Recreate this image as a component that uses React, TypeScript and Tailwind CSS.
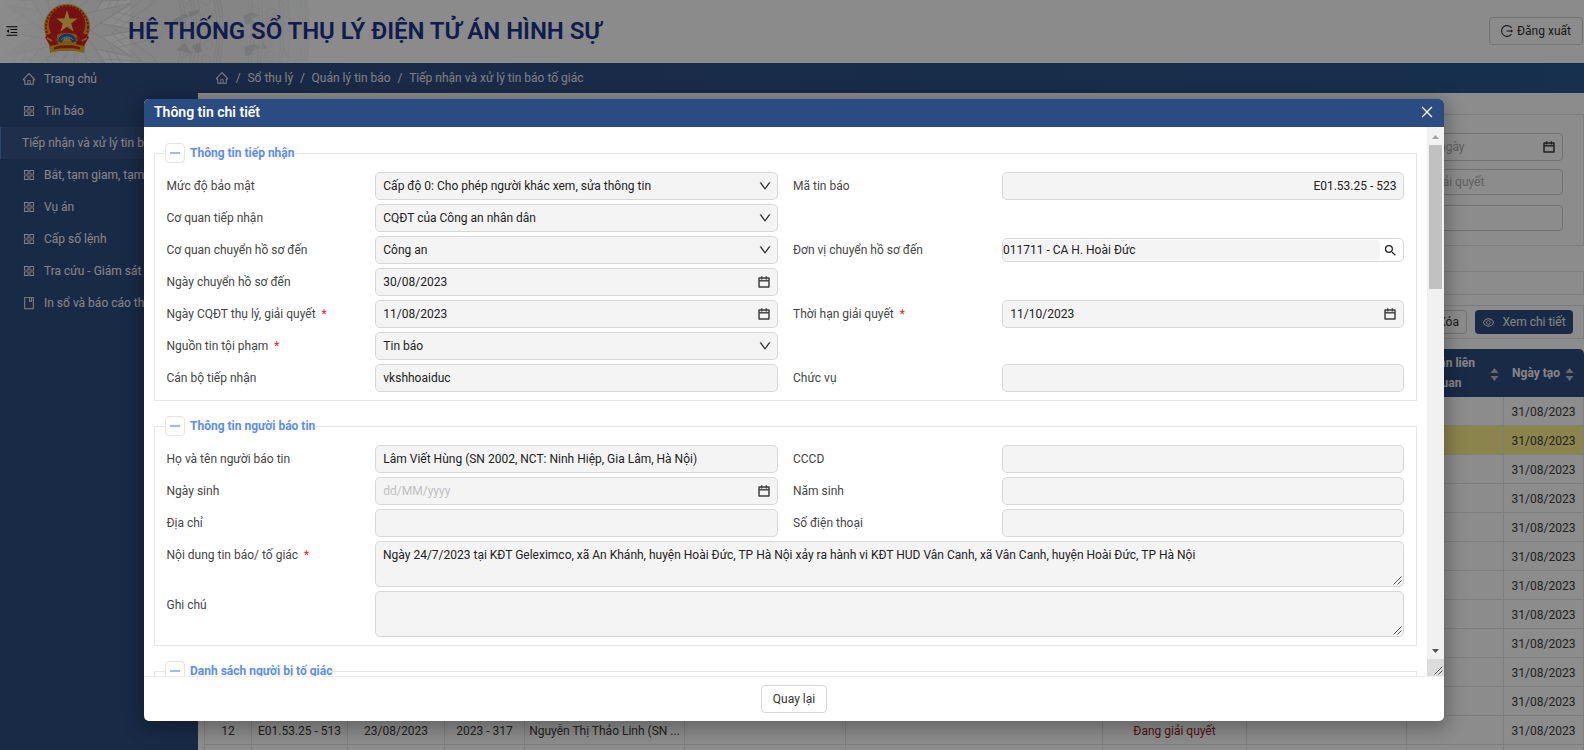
import React from "react";
import {
  AiOutlineHome,
  AiOutlineAppstore,
  AiOutlineBook,
  AiOutlineMenuFold,
  AiOutlineLogout,
  AiOutlineEye,
  AiOutlineCalendar,
  AiOutlineDown,
  AiOutlineClose,
} from "react-icons/ai";
import { MdSearch } from "react-icons/md";

function Watermark() {
  const rays = Array.from({ length: 16 }, (_, i) => i * 22.5);
  const marks = Array.from({ length: 60 }, (_, i) => i * 6);
  return (
    <svg width="330" height="63" viewBox="0 0 330 63" className="absolute left-0 top-0" aria-hidden="true">
      <defs>
        <linearGradient id="fade" x1="0" x2="1">
          <stop offset="0" stopColor="#fff" stopOpacity="0" />
          <stop offset="0.2" stopColor="#fff" stopOpacity="0.9" />
          <stop offset="0.7" stopColor="#fff" stopOpacity="0.9" />
          <stop offset="1" stopColor="#fff" stopOpacity="0.15" />
        </linearGradient>
        <mask id="fadeMask">
          <rect width="330" height="63" fill="url(#fade)" />
        </mask>
      </defs>
      <g mask="url(#fadeMask)" fill="none" stroke="#dddddf" strokeWidth="1">
        <path d="M130 0H308V63H130Z" fill="#f0f0f1" stroke="none" />
        {rays.map((a) => (
          <g key={a} transform={`translate(67 30) rotate(${a})`}>
            <path d="M20 -9L70 0L20 9" fill="#f1f2f1" />
            <path d="M42 -14L58 -8L82 0L58 8L42 14M40 -20L90 -8L100 0L90 8L40 20" strokeWidth="0.8" />
          </g>
        ))}
        {[116, 119, 127, 130, 134, 150, 153, 156, 184, 187, 193, 196, 214, 217, 223, 236, 239, 242].map((r) => (
          <circle key={r} cx="67" cy="30" r={r} strokeWidth="0.9" />
        ))}
        {marks.map((a) => (
          <g key={a} transform={`translate(67 30) rotate(${a})`}>
            <path d="M119 -4L127 3M119 3L127 -4M187 -6L193 0L187 6M217 -6L223 5M228 -8L236 0L228 8" strokeWidth="0.8" />
            <circle cx="142" cy="0" r="4.5" strokeWidth="0.8" />
            <circle cx="205" cy="5" r="5" strokeWidth="0.8" />
          </g>
        ))}
        <path
          d="M172 20l12-6 6 2-9 4 6 3-10 3zM176 50l9-7 3 5 4 6-6-2zM188 12l12-3-2 5-8 3zM192 46l8-4 2 10-6 1zM243 16l9-4 8 4-9 2 3 5-8 1zM244 47l10-3 8 3-8 3-3 5-6 1zM262 40l5 8-4 1z"
          fill="#d2d3d5"
          stroke="none"
        />
      </g>
    </svg>
  );
}

function Emblem() {
  return (
    <svg width="48" height="50" viewBox="0 0 48 50" className="relative" aria-hidden="true">
      <circle cx="24" cy="23" r="22.9" fill="#e3a51c" />
      <circle cx="24" cy="23" r="21" fill="none" stroke="#d2261f" strokeWidth="2" strokeDasharray="2.2 1.300" />
      <circle cx="24" cy="20.5" r="18.3" fill="#d6221f" />
      <path d="M2 33L8 29L14 37L34 37L40 29L46 33L41.500 41L41 48L31 46.500L17 46.500L7 48L6.500 41Z" fill="#d6221f" />
      <path d="M4 34L9 37M44 34L39 37" stroke="#e2b21c" strokeWidth="1.500" fill="none" />
      <path d="M7 42L17 40H31L41 42V49L31 46.500H17L7 49Z" fill="#e2b21c" />
      <path d="M11 43L18 41.300H30L37 43V45.500L30 44.300H18L11 45.500Z" fill="#cf2a1e" />
      <path
        d="M24 6L26.600 14.600H34.500L28.200 19.600L30.500 27.500L24 22.700L17.500 27.500L19.800 19.600L13.500 14.600H21.400Z"
        fill="#f7cf5c"
      />
      <path d="M14 32C14 28 34 28 34 32L33 40H15Z" fill="#dda51d" />
      <path d="M15 37a9 7.500 0 0 1 18 0l-4 2a5 5 0 0 0-10 0Z" fill="#2a63ad" />
      <path d="M18 36a6.500 5 0 0 1 12 0M21 34l1 3M24 33v4M27 34l-1 3" fill="none" stroke="#b9cfe8" strokeWidth="0.9" />
    </svg>
  );
}

const menu = [
  { icon: AiOutlineHome, label: "Trang chủ" },
  { icon: AiOutlineAppstore, label: "Tin báo" },
  { label: "Tiếp nhận và xử lý tin báo tố giác", active: true },
  { icon: AiOutlineAppstore, label: "Bắt, tạm giam, tạm giữ" },
  { icon: AiOutlineAppstore, label: "Vụ án" },
  { icon: AiOutlineAppstore, label: "Cấp số lệnh" },
  { icon: AiOutlineAppstore, label: "Tra cứu - Giám sát" },
  { icon: AiOutlineBook, label: "In sổ và báo cáo thống kê" },
];

function Sidebar() {
  return (
    <nav className="w-[198px] shrink-0 bg-[#2f4e82] text-[12px] text-[#f2f2f2]">
      {menu.map(({ icon: Icon, label, active }) => (
        <div
          key={label}
          className={
            active
              ? "flex h-8 items-center whitespace-nowrap border-l border-[#4a7fd8] bg-[#375489] pl-[21px]"
              : "flex h-8 items-center whitespace-nowrap pl-[22px]"
          }
        >
          {Icon && <Icon className="mb-px mr-2 size-3.5 shrink-0" />}
          <span>{label}</span>
        </div>
      ))}
    </nav>
  );
}

function Sorter() {
  return (
    <svg width="9" height="13" viewBox="0 0 9 13" fill="#bfbfbf" className="mt-0.5" aria-hidden="true">
      <path d="M4.500 0L8.500 5H0.500ZM4.500 13L0.500 8H8.500Z" />
    </svg>
  );
}

const columns =
  "grid grid-cols-[47px_96px_97px_80px_160px_161px_257px_144px_160px_97px_80px] border-l border-[#e6e6e6]";

function Cell({ children, className = "" }: { children?: React.ReactNode; className?: string }) {
  return (
    <div className={`flex items-center justify-center border-b border-r border-[#e6e6e6] pt-px ${className}`}>{children}</div>
  );
}

function Table() {
  return (
    <div className="ml-1.5 mt-[10px] text-[12px] text-[#3c3c3c]">
      <div className="flex h-12 justify-end rounded-t-[5px] bg-[#2f4e82] text-[12px] font-bold leading-5 text-[#f2f2f2]">
        <div className="flex w-[97px] items-center justify-end pr-[5px]">
          <span className="mr-[15px] whitespace-nowrap text-center">
            Dự án liên
            <br />
            quan
          </span>
          <Sorter />
        </div>
        <div className="flex w-[80px] items-center justify-end gap-[5px] pr-[10px]">
          <span className="whitespace-nowrap">Ngày tạo</span>
          <Sorter />
        </div>
      </div>
      {Array.from({ length: 13 }, (_, i) => {
        const last = i === 11;
        return (
          <div key={i} className={`${columns} h-[29px] ${i === 1 ? "bg-[#fff08c]" : ""}`}>
            <Cell>{last && "12"}</Cell>
            <Cell>{last && "E01.53.25 - 513"}</Cell>
            <Cell>{last && "23/08/2023"}</Cell>
            <Cell>{last && "2023 - 317"}</Cell>
            <Cell className="whitespace-nowrap">{last && "Nguyễn Thị Thảo Linh (SN ..."}</Cell>
            <Cell />
            <Cell />
            <Cell className="text-[#8b2626]">{last && "Đang giải quyết"}</Cell>
            <Cell />
            <Cell />
            <Cell>{i < 12 && "31/08/2023"}</Cell>
          </div>
        );
      })}
    </div>
  );
}

function Backdrop() {
  return (
    <div className="flex h-[750px] flex-col bg-white">
      <header className="relative flex h-[63px] shrink-0 items-center bg-[#fbfdfb]">
        <Watermark />
        <AiOutlineMenuFold className="relative ml-[5px] mt-[-2px] size-3.5 text-black" />
        <div className="relative ml-6 mt-[-5px]">
          <Emblem />
        </div>
        <h1 className="relative ml-[37px] mt-[-2px] text-[24px] font-semibold tracking-[-0.05px] text-[#1b3390]">
          HỆ THỐNG SỔ THỤ LÝ ĐIỆN TỬ ÁN HÌNH SỰ
        </h1>
        <button className="relative ml-auto mr-[1px] mt-[-1px] flex h-7 w-[94px] items-center justify-center gap-[3px] rounded-[4px] border border-[#d0d0d0] pr-px text-[12px] text-[#2f2f2f]">
          <AiOutlineLogout className="size-[14px]" />
          Đăng xuất
        </button>
      </header>
      <div className="flex min-h-0 flex-1">
        <Sidebar />
        <main className="flex min-w-0 flex-1 flex-col overflow-hidden">
          <div className="flex h-[30px] shrink-0 items-center gap-[6.750px] bg-gradient-to-r from-[#314b80] to-[#28588e] pl-[17px] text-[12px] text-[#e4e8ef]">
            <AiOutlineHome className="mb-px size-3.5" />
            <span>/</span>
            <span>Sổ thụ lý</span>
            <span>/</span>
            <span>Quản lý tin báo</span>
            <span>/</span>
            <span>Tiếp nhận và xử lý tin báo tố giác</span>
          </div>
          <div className="ml-1.5 mt-[21px] flex h-[132px] shrink-0 flex-col items-end border border-[#e4e4e4] pr-[20px] pt-[18px] text-[12px] text-[#b0b0b0]">
            <div className="flex h-7 w-[240px] shrink-0 items-center justify-between rounded-[4px] border border-[#d0d0d0] pl-[91px] pr-[6px]">
              Đến ngày
              <AiOutlineCalendar className="size-[14px] text-[#303030]" strokeWidth="30" />
            </div>
            <div className="mt-2 flex h-[26px] w-[240px] shrink-0 items-center rounded-[4px] border border-[#d0d0d0] pl-[109px]">
              giải quyết
            </div>
            <div className="mt-2.5 h-[26px] w-[240px] shrink-0 rounded-[4px] border border-[#d0d0d0]" />
          </div>
          <div className="ml-1.5 mt-[25px] h-6 shrink-0 border border-[#e4e4e4]" />
          <div className="ml-1.5 mt-2.5 flex h-[34px] shrink-0 items-center justify-end gap-2 border border-[#e4e4e4] pr-[10px] text-[12px]">
            <button className="flex h-6 w-[60px] items-center justify-end rounded-[4px] border border-[#d0d0d0] pr-[7px] text-[#333]">
              Xóa
            </button>
            <button className="flex h-6 w-[98px] items-center justify-center gap-[7px] whitespace-nowrap rounded-[4px] bg-[#2f4e82] text-[#f2f2f2]">
              <AiOutlineEye className="size-[13px]" />
              Xem chi tiết
            </button>
          </div>
          <Table />
        </main>
      </div>
    </div>
  );
}

function Grip() {
  return (
    <svg width="9" height="9" viewBox="0 0 9 9" className="absolute bottom-px right-px" stroke="#555" strokeWidth="1" fill="none" aria-hidden="true">
      <path d="M0.500 8.500L8.500 0.500M4.500 8.500L8.500 4.500" />
    </svg>
  );
}

const box = "rounded-[5px] border border-[#d7d7d7] bg-[#f4f4f4]";

type FieldProps = {
  label: string;
  value?: string;
  kind?: "text" | "select" | "date" | "right" | "search";
  required?: boolean;
  placeholder?: boolean;
};

function Label({ text, required }: { text: string; required?: boolean }) {
  return (
    <span className="text-[#454545]">
      {text}
      {required && <span className="ml-1.5 text-[#f5222d]">*</span>}
    </span>
  );
}

function Field({ label, value, kind = "text", required, placeholder }: FieldProps) {
  return (
    <>
      <Label text={label} required={required} />
      {kind === "search" ? (
        <div className="flex h-6 items-center rounded-[5px] border border-[#d7d7d7] bg-white">
          <span className="flex h-5 w-[377px] items-center rounded-[4px] bg-[#f4f4f4] text-[#222]">{value}</span>
          <MdSearch className="ml-[3px] size-[15px] text-[#222]" />
        </div>
      ) : (
        <div
          className={`${box} flex h-7 items-center pl-[7.300px] pr-[6px] ${kind === "right" ? "justify-end" : "justify-between"} ${
            placeholder ? "text-[#bfbfbf]" : "text-[#222]"
          }`}
        >
          <span className={kind === "right" ? "mr-[0.500px]" : ""}>{value}</span>
          {kind === "select" && <AiOutlineDown className="-mr-px size-3.5 text-[#262626]" strokeWidth="8" />}
          {kind === "date" && <AiOutlineCalendar className="size-[14px] text-[#333]" strokeWidth="30" />}
        </div>
      )}
    </>
  );
}

function Area({ label, value, required }: { label: string; value?: string; required?: boolean }) {
  return (
    <div className="flex">
      <div className="w-[208.500px] shrink-0 pt-[5px]">
        <Label text={label} required={required} />
      </div>
      <div className={`${box} relative h-[46px] flex-1 px-[7px] pt-1 text-[#222]`}>
        {value}
        <Grip />
      </div>
    </div>
  );
}

function Section({ title, children }: { title: string; children?: React.ReactNode }) {
  return (
    <section className="flex flex-col">
      <div className="flex h-5 items-center">
        <span className="h-2.5 w-[11px] self-end border-l border-t border-[#e6e6e6]" />
        <span className="flex size-5 items-center justify-center rounded-[4px] border border-[#e3e3e3]">
          <span className="h-0.5 w-2.5 bg-[#9dbcf3]" />
        </span>
        <h3 className="ml-[5px] text-[12px] font-bold leading-5 text-[#5b8def]">{title}</h3>
        <span className="h-2.5 flex-1 self-end border-r border-t border-[#e6e6e6]" />
      </div>
      <div className="flex flex-col gap-1 border-x border-b border-[#e6e6e6] pb-2 pl-[11.500px] pr-3 pt-[9px]">{children}</div>
    </section>
  );
}

const grid = "grid auto-rows-[28px] grid-cols-[208.500px_403px_15px_209px_402px] items-center gap-y-1";

function Row({ left, right }: { left: FieldProps; right?: FieldProps }) {
  return (
    <>
      <Field {...left} />
      <span />
      {right ? (
        <Field {...right} />
      ) : (
        <>
          <span />
          <span />
        </>
      )}
    </>
  );
}

function Modal() {
  return (
    <div className="flex h-[622px] w-[1300px] flex-col overflow-hidden rounded-[5px] bg-white shadow-[0_4px_18px_4px_rgba(0,0,0,0.28)]">
      <div className="flex h-7 shrink-0 items-center justify-between bg-[#2a4c82] pl-[10px] pr-[9px] text-white">
        <h2 className="mb-0.5 text-[14px] font-semibold">Thông tin chi tiết</h2>
        <AiOutlineClose className="mb-[3px] size-4" />
      </div>
      <div className="flex h-[549px] shrink-0">
        <div className="flex min-w-0 flex-1 flex-col gap-[15px] overflow-hidden pl-[10px] pr-[10px] pt-4 text-[12px] leading-[18px]">
          <Section title="Thông tin tiếp nhận">
            <div className={grid}>
              <Row
                left={{ label: "Mức độ bảo mật", value: "Cấp độ 0: Cho phép người khác xem, sửa thông tin", kind: "select" }}
                right={{ label: "Mã tin báo", value: "E01.53.25 - 523", kind: "right" }}
              />
              <Row left={{ label: "Cơ quan tiếp nhận", value: "CQĐT của Công an nhân dân", kind: "select" }} />
              <Row
                left={{ label: "Cơ quan chuyển hồ sơ đến", value: "Công an", kind: "select" }}
                right={{ label: "Đơn vị chuyển hồ sơ đến", value: "011711 - CA H. Hoài Đức", kind: "search" }}
              />
              <Row left={{ label: "Ngày chuyển hồ sơ đến", value: "30/08/2023", kind: "date" }} />
              <Row
                left={{ label: "Ngày CQĐT thụ lý, giải quyết", value: "11/08/2023", kind: "date", required: true }}
                right={{ label: "Thời hạn giải quyết", value: "11/10/2023", kind: "date", required: true }}
              />
              <Row left={{ label: "Nguồn tin tội phạm", value: "Tin báo", kind: "select", required: true }} />
              <Row left={{ label: "Cán bộ tiếp nhận", value: "vkshhoaiduc" }} right={{ label: "Chức vụ" }} />
            </div>
          </Section>
          <Section title="Thông tin người báo tin">
            <div className={grid}>
              <Row
                left={{ label: "Họ và tên người báo tin", value: "Lâm Viết Hùng (SN 2002, NCT: Ninh Hiệp, Gia Lâm, Hà Nội)" }}
                right={{ label: "CCCD" }}
              />
              <Row left={{ label: "Ngày sinh", value: "dd/MM/yyyy", kind: "date", placeholder: true }} right={{ label: "Năm sinh" }} />
              <Row left={{ label: "Địa chỉ" }} right={{ label: "Số điện thoại" }} />
            </div>
            <Area
              label="Nội dung tin báo/ tố giác"
              required
              value="Ngày 24/7/2023 tại KĐT Geleximco, xã An Khánh, huyện Hoài Đức, TP Hà Nội xảy ra hành vi KĐT HUD Vân Canh, xã Vân Canh, huyện Hoài Đức, TP Hà Nội"
            />
            <Area label="Ghi chú" />
          </Section>
          <Section title="Danh sách người bị tố giác" />
        </div>
        <div className="flex w-[17px] shrink-0 flex-col bg-[#f1f1f1]">
          <span className="flex h-[18px] items-center justify-center pt-0.5">
            <svg width="7" height="4" viewBox="0 0 7 4" fill="#a3a3a3" aria-hidden="true">
              <path d="M3.500 0L7 4H0Z" />
            </svg>
          </span>
          <span className="mx-auto h-36 w-[13px] bg-[#c1c1c1]" />
          <span className="mt-auto flex h-[17px] items-center justify-center">
            <svg width="7" height="4" viewBox="0 0 7 4" fill="#505050" aria-hidden="true">
              <path d="M3.500 4L7 0H0Z" />
            </svg>
          </span>
          <span className="relative h-[17px] bg-[#dcdcdc]">
            <Grip />
          </span>
        </div>
      </div>
      <div className="flex flex-1 items-center justify-center border-t border-[#ececec]">
        <button className="h-7 w-[66px] rounded-[4px] border border-[#d7d7d7] bg-white text-[12px] text-[#333]">Quay lại</button>
      </div>
    </div>
  );
}

export default function App() {
  return (
    <div className="relative h-[750px] w-[1584px] overflow-hidden font-['Roboto',sans-serif]">
      <Backdrop />
      <div className="absolute inset-0 flex items-start bg-black/45 pl-[144px] pt-[99px]">
        <Modal />
      </div>
    </div>
  );
}
